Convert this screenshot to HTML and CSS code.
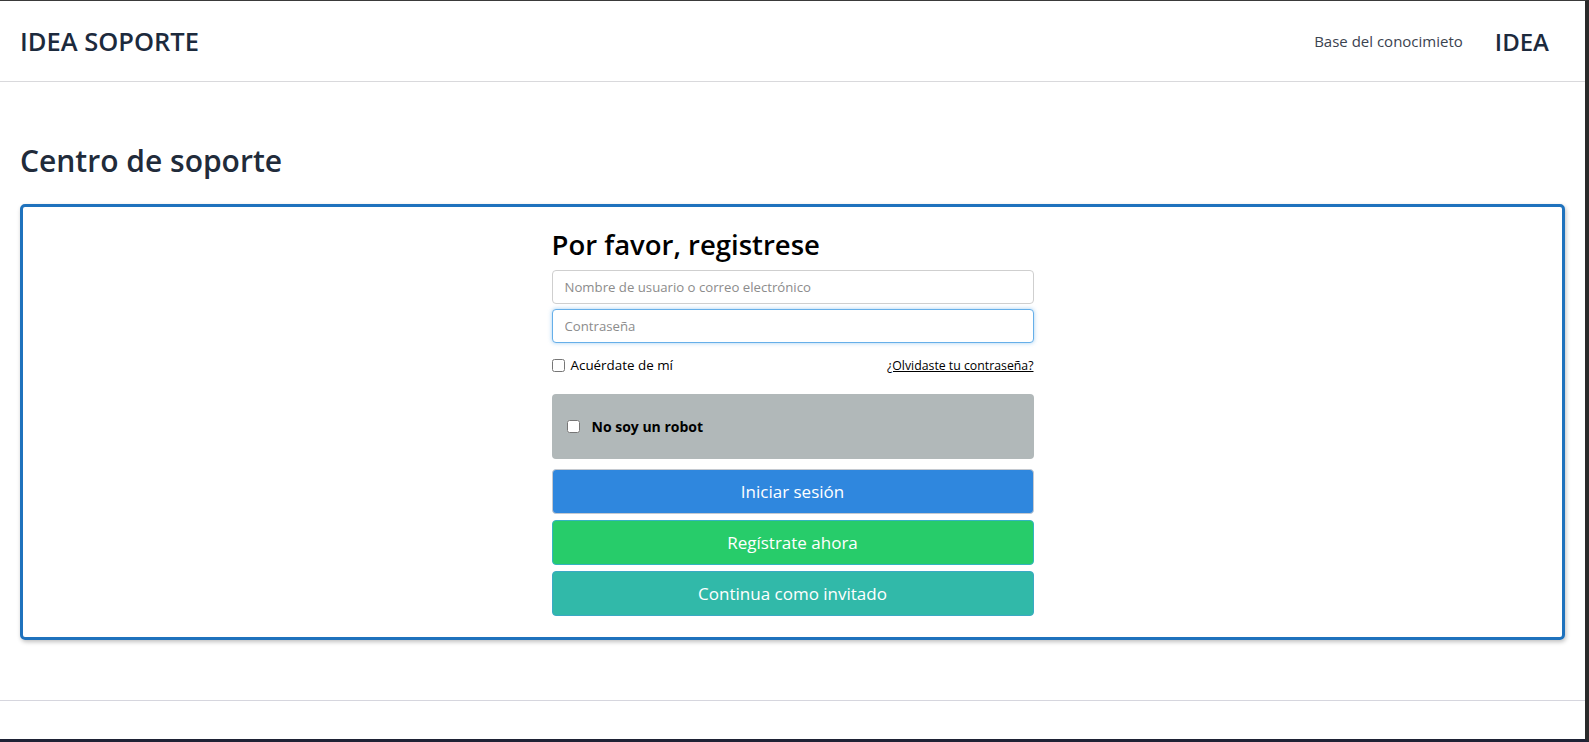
FILE: index.html
```html
<!DOCTYPE html>
<html lang="es">
<head>
  <meta charset="UTF-8">
  <title>IDEA SOPORTE - Centro de soporte</title>
  <link rel="stylesheet" href="styles.css">
</head>
<body>
  <div class="frame">
    <header class="topbar">
      <a class="brand" href="#">IDEA SOPORTE</a>
      <nav class="topnav">
        <a href="#">Base del conocimieto</a>
        <span class="brand-small">IDEA</span>
      </nav>
    </header>

    <main class="page">
      <h2 class="page-title">Centro de soporte</h2>

      <section class="card">
        <form class="login" onsubmit="return false;">
          <h3>Por favor, registrese</h3>
          <input type="text" class="field" placeholder="Nombre de usuario o correo electrónico">
          <input type="password" class="field field-active" placeholder="Contraseña">

          <div class="login-row">
            <label class="remember"><input type="checkbox"> Acuérdate de mí</label>
            <a href="#" class="forgot">¿Olvidaste tu contraseña?</a>
          </div>

          <div class="captcha">
            <label><input type="checkbox"> No soy un robot</label>
          </div>

          <button class="btn btn-blue">Iniciar sesión</button>
          <button class="btn btn-green">Regístrate ahora</button>
          <button class="btn btn-teal">Continua como invitado</button>
        </form>
      </section>
    </main>

    <footer class="footer"></footer>
  </div>
</body>
</html>
```

FILE: styles.css
```css
html, body {
  margin: 0;
  padding: 0;
}

body {
  font-family: "Open Sans", "Noto Sans", Arial, sans-serif;
  color: #212b3a;
  background: #1f2331;
}

.frame {
  height: 742px;
  box-sizing: border-box;
  background: #fff;
  border-top: 1px solid #3a3a3a;
  border-right: 4px solid #2a2a2a;
  border-bottom: 3px solid #1e2235;
  display: flex;
  flex-direction: column;
}

.topbar {
  height: 80px;
  border-bottom: 1px solid #d9d9dc;
  display: flex;
  align-items: center;
  justify-content: space-between;
  padding: 0 20px;
}

.brand {
  font-size: 25.5px;
  font-weight: 600;
  color: #1c2a3d;
  text-decoration: none;
}

.topnav {
  display: flex;
  align-items: center;
  gap: 32px;
  padding-right: 16px;
}

.topnav a {
  font-size: 15px;
  color: #3b4350;
  text-decoration: none;
}

.brand-small {
  font-size: 24px;
  font-weight: 600;
  color: #1c2a3d;
}

.page {
  padding: 0 20px;
  flex: 1;
}

.page-title {
  font-size: 30px;
  font-weight: 600;
  line-height: 36px;
  margin: 61px 0 25px 0;
  color: #212b3a;
}

.card {
  border: 3px solid #1f72bd;
  border-radius: 5px;
  box-shadow: 1px 2px 4px rgba(0,0,0,0.25);
  padding: 20px 0 21px;
}

.login {
  width: 482px;
  margin: 0 auto;
  display: flex;
  flex-direction: column;
}

.login h3 {
  font-size: 27.5px;
  font-weight: 600;
  line-height: 35px;
  margin: 0 0 8px 0;
  color: #000;
}

.field {
  height: 34px;
  box-sizing: border-box;
  border: 1px solid #cfcfcf;
  border-radius: 4px;
  padding: 0 12px;
  font-family: inherit;
  font-size: 13.2px;
  margin-bottom: 5px;
  outline: none;
}

.field::placeholder {
  color: #8c8c8c;
}

.field-active {
  border-color: #66afe9;
  box-shadow: 0 0 4px rgba(102,175,233,0.6);
}

.login-row {
  display: flex;
  justify-content: space-between;
  align-items: center;
  margin-top: 8px;
  color: #000;
}

.remember {
  display: flex;
  align-items: center;
  gap: 6px;
  font-size: 13.4px;
}

.remember input,
.captcha input {
  margin: 0;
  width: 13px;
  height: 13px;
}

.forgot {
  font-size: 12.3px;
  color: #000;
  text-decoration: underline;
}

.captcha {
  margin-top: 20px;
  height: 65px;
  background: #b1b8b9;
  border-radius: 4px;
  display: flex;
  align-items: center;
  padding-left: 15px;
}

.captcha label {
  display: flex;
  align-items: center;
  gap: 12px;
  font-size: 14px;
  font-weight: 700;
  color: #000;
}

.btn {
  height: 45px;
  border-radius: 4px;
  border: 1px solid transparent;
  color: #fff;
  font-family: inherit;
  font-size: 17px;
  cursor: pointer;
  margin-top: 6px;
}

.btn-blue {
  margin-top: 10px;
  background: #2f87de;
  border-color: #c4c9d0;
}

.btn-green {
  background: #27cc6a;
  border-color: #33b4c0;
}

.btn-teal {
  background: #31b9a9;
  border-color: #3aa9c4;
}

.footer {
  height: 38px;
  border-top: 1px solid #d6d6de;
}
```
